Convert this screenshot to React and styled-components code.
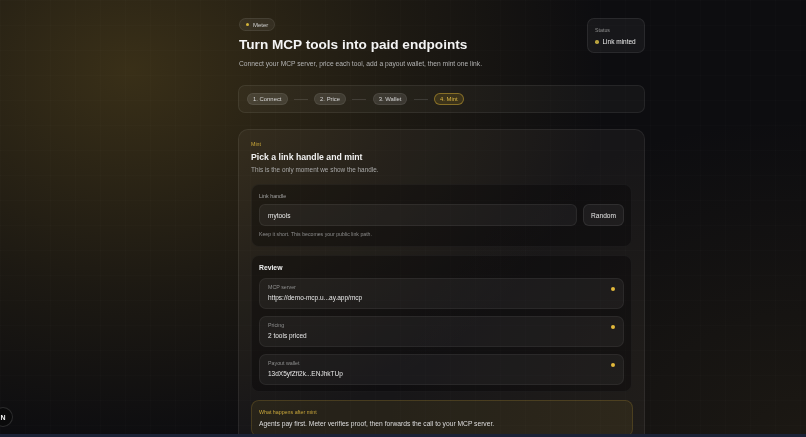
import React from "react";
import styled, { createGlobalStyle } from "styled-components";

const Global = createGlobalStyle`
  html, body { margin: 0; padding: 0; height: 100%; overflow: hidden; }
  body {
    font-family: "Liberation Sans", Arial, sans-serif;
    background-color: #0d0d10;
    background-image:
      radial-gradient(ellipse 560px 440px at 130px 70px, rgba(135, 108, 38, 0.36), rgba(110, 88, 32, 0.16) 50%, transparent 85%),
      radial-gradient(ellipse 420px 320px at 806px 437px, rgba(100, 80, 35, 0.17), transparent 100%);
    color: #f2f2f2;
  }
  * { box-sizing: border-box; }
`;

const Grid = styled.div`
  position: fixed;
  inset: 0;
  pointer-events: none;
  background-image:
    linear-gradient(to right, rgba(255,255,255,0.013) 1px, transparent 1px),
    linear-gradient(to bottom, rgba(255,255,255,0.01) 1px, transparent 1px);
  background-size: 25px 25px;
`;

const Page = styled.div`
  position: relative;
  display: flex;
  padding: 18px 0 0 238px;
`;

const Column = styled.main`
  width: 407px;
  display: flex;
  flex-direction: column;
`;

const Header = styled.header`
  display: flex;
  justify-content: space-between;
  align-items: flex-start;
`;

const HeaderText = styled.div`
  display: flex;
  flex-direction: column;
  align-items: flex-start;
  padding-left: 1px;
`;

const Chip = styled.span`
  display: inline-flex;
  align-items: center;
  gap: 4px;
  height: 13px;
  padding: 0 6px;
  border-radius: 999px;
  background: rgba(255, 255, 255, 0.06);
  border: 1px solid rgba(255, 255, 255, 0.08);
  font-size: 6px;
  color: #cfcfcf;
`;

const Dot = styled.span`
  display: inline-block;
  width: ${(p) => p.$size || 3}px;
  height: ${(p) => p.$size || 3}px;
  border-radius: 50%;
  background: ${(p) => p.$color || "#d4b43a"};
  flex: none;
`;

const Title = styled.h1`
  margin: 6px 0 0;
  font-size: 13.6px;
  line-height: 16px;
  font-weight: 700;
  color: #f4f4f4;
`;

const Subtitle = styled.p`
  margin: 7px 0 0;
  font-size: 6.7px;
  line-height: 8px;
  color: #b3b3b3;
`;

const StatusCard = styled.aside`
  width: 58px;
  height: 35px;
  padding: 8px 7px 0;
  border-radius: 7px;
  background: rgba(255, 255, 255, 0.045);
  border: 1px solid rgba(255, 255, 255, 0.08);
  display: flex;
  flex-direction: column;
  gap: 4px;
`;

const Tiny = styled.div`
  font-size: 5.3px;
  line-height: 7px;
  color: ${(p) => p.$color || "#8f8f8f"};
`;

const StatusValue = styled.div`
  display: flex;
  align-items: center;
  gap: 4px;
  font-size: 6.5px;
  line-height: 8px;
  color: #ededed;
`;

const Stepper = styled.nav`
  margin-top: 17px;
  height: 28px;
  padding: 0 8px;
  border-radius: 7px;
  background: rgba(255, 245, 220, 0.035);
  border: 1px solid rgba(255, 255, 255, 0.07);
  display: flex;
  align-items: center;
`;

const Step = styled.span`
  display: inline-flex;
  align-items: center;
  height: 12px;
  padding: 0 5px;
  border-radius: 999px;
  font-size: 5.9px;
  white-space: nowrap;
  background: ${(p) => (p.$active ? "rgba(200, 160, 40, 0.16)" : "rgba(255, 255, 255, 0.1)")};
  border: 1px solid ${(p) => (p.$active ? "rgba(210, 170, 50, 0.5)" : "rgba(255, 255, 255, 0.07)")};
  color: ${(p) => (p.$active ? "#d8b443" : "#d6d6d6")};
`;

const Connector = styled.span`
  width: 14px;
  height: 1px;
  margin: 0 6.3px;
  background: rgba(255, 255, 255, 0.12);
`;

const MainCard = styled.section`
  margin-top: 16px;
  padding: 11px 12px 12px;
  border-radius: 10px;
  background: rgba(255, 240, 210, 0.045);
  border: 1px solid rgba(255, 255, 255, 0.07);
  display: flex;
  flex-direction: column;
`;

const Eyebrow = styled.div`
  font-size: 5.3px;
  line-height: 7px;
  color: #c9a73a;
`;

const CardHeading = styled.h2`
  margin: 4px 0 0;
  font-size: 8.7px;
  line-height: 11px;
  font-weight: 700;
  color: #f2f2f2;
`;

const CardDesc = styled.p`
  margin: 3px 0 0;
  font-size: 6.4px;
  line-height: 8px;
  color: #a9a9a9;
`;

const Inner = styled.div`
  margin-top: ${(p) => p.$mt || 9}px;
  padding: ${(p) => p.$pad || "7px 7px 8px"};
  border-radius: 8px;
  background: rgba(0, 0, 0, 0.3);
  border: 1px solid rgba(255, 255, 255, 0.04);
  display: flex;
  flex-direction: column;
`;

const InputRow = styled.div`
  margin-top: 4px;
  display: flex;
  gap: 6px;
`;

const Input = styled.div`
  flex: 1;
  height: 22px;
  padding: 0 8px;
  border-radius: 6px;
  background: rgba(255, 255, 255, 0.05);
  border: 1px solid rgba(255, 255, 255, 0.06);
  display: flex;
  align-items: center;
  font-size: 6.5px;
  color: #ececec;
`;

const Button = styled.button`
  width: 41px;
  height: 22px;
  padding: 0;
  border-radius: 6px;
  background: rgba(255, 255, 255, 0.06);
  border: 1px solid rgba(255, 255, 255, 0.08);
  font-family: inherit;
  font-size: 6.6px;
  color: #e6e6e6;
`;

const Helper = styled.div`
  margin-top: 5px;
  font-size: 5.2px;
  line-height: 7px;
  color: #8d8d8d;
`;

const ReviewTitle = styled.h3`
  margin: 0;
  font-size: 6.8px;
  line-height: 9px;
  font-weight: 700;
  color: #f0f0f0;
`;

const ReviewList = styled.div`
  margin-top: 6px;
  display: flex;
  flex-direction: column;
  gap: 7px;
`;

const ReviewItem = styled.div`
  position: relative;
  height: 31px;
  padding: 5px 8px 0;
  border-radius: 7px;
  background: rgba(255, 255, 255, 0.05);
  border: 1px solid rgba(255, 255, 255, 0.055);
  display: flex;
  flex-direction: column;
  gap: 3px;
`;

const ItemValue = styled.div`
  font-size: 6.5px;
  line-height: 8px;
  color: #e8e8e8;
`;

const ItemDot = styled(Dot)`
  position: absolute;
  right: 8px;
  top: 8px;
`;

const Note = styled.div`
  margin-top: 8px;
  margin-right: -1px;
  padding: 8px 7px 8px;
  border-radius: 8px;
  background: rgba(190, 150, 40, 0.09);
  border: 1px solid rgba(200, 160, 50, 0.2);
  display: flex;
  flex-direction: column;
  gap: 4px;
`;

const NoteText = styled.div`
  font-size: 6.7px;
  line-height: 8px;
  color: #dedede;
`;

const BottomStrip = styled.div`
  position: fixed;
  left: 0;
  right: 0;
  bottom: 0;
  height: 3px;
  background: #1b2236;
`;

const DevBadge = styled.div`
  position: fixed;
  left: -7px;
  top: 407px;
  width: 20px;
  height: 20px;
  border-radius: 50%;
  background: #0a0a0b;
  border: 1px solid rgba(255, 255, 255, 0.14);
  display: flex;
  align-items: center;
  justify-content: center;
  font-size: 7px;
  font-weight: 700;
  color: #f0f0f0;
`;

const steps = ["1. Connect", "2. Price", "3. Wallet", "4. Mint"];

const review = [
  { label: "MCP server", value: "https://demo-mcp.u...ay.app/mcp" },
  { label: "Pricing", value: "2 tools priced" },
  { label: "Payout wallet", value: "13dX5yfZfi2k...ENJhkTUp" },
];

export default function App() {
  return (
    <>
      <Global />
      <Grid />
      <Page>
        <Column>
          <Header>
            <HeaderText>
              <Chip>
                <Dot />
                Meter
              </Chip>
              <Title>Turn MCP tools into paid endpoints</Title>
              <Subtitle>
                Connect your MCP server, price each tool, add a payout wallet, then mint one link.
              </Subtitle>
            </HeaderText>
            <StatusCard>
              <Tiny>Status</Tiny>
              <StatusValue>
                <Dot $size={3.5} $color="#b9a23e" />
                Link minted
              </StatusValue>
            </StatusCard>
          </Header>

          <Stepper>
            {steps.map((s, i) => (
              <React.Fragment key={s}>
                {i > 0 && <Connector />}
                <Step $active={i === steps.length - 1}>{s}</Step>
              </React.Fragment>
            ))}
          </Stepper>

          <MainCard>
            <Eyebrow>Mint</Eyebrow>
            <CardHeading>Pick a link handle and mint</CardHeading>
            <CardDesc>This is the only moment we show the handle.</CardDesc>

            <Inner $mt={10} $pad="8px 7px 8px">
              <Tiny $color="#a3a3a3">Link handle</Tiny>
              <InputRow>
                <Input>mytools</Input>
                <Button>Random</Button>
              </InputRow>
              <Helper>Keep it short. This becomes your public link path.</Helper>
            </Inner>

            <Inner $mt={8} $pad="7px 7px 6px">
              <ReviewTitle>Review</ReviewTitle>
              <ReviewList>
                {review.map((r) => (
                  <ReviewItem key={r.label}>
                    <Tiny>{r.label}</Tiny>
                    <ItemValue>{r.value}</ItemValue>
                    <ItemDot $size={4} $color="#e2b93b" />
                  </ReviewItem>
                ))}
              </ReviewList>
            </Inner>

            <Note>
              <Tiny $color="#c9a73a">What happens after mint</Tiny>
              <NoteText>
                Agents pay first. Meter verifies proof, then forwards the call to your MCP server.
              </NoteText>
            </Note>
          </MainCard>
        </Column>
      </Page>
      <DevBadge>N</DevBadge>
      <BottomStrip />
    </>
  );
}
